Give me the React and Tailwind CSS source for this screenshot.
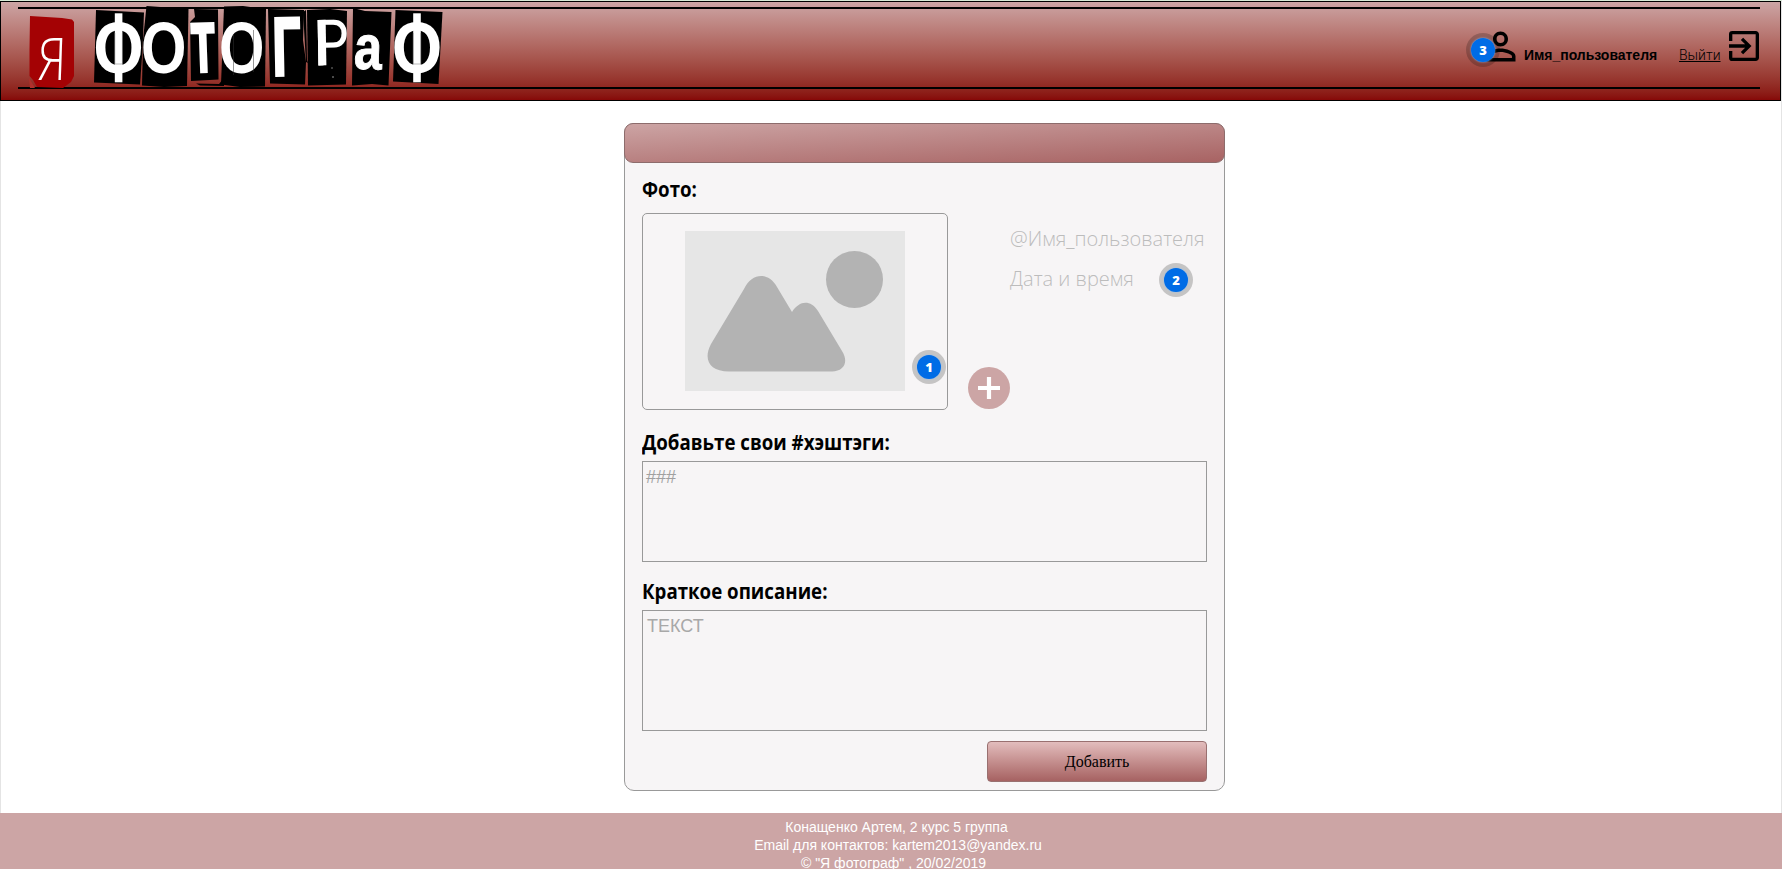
import React from "react";
import { MdPersonOutline, MdExitToApp } from "react-icons/md";

const TILES = [
  "96,10 144,12.5 142.5,50 140,84.5 94,82.5",
  "146.5,6 188.5,9 187,86 164,87 142,85.5 143,40",
  "194,9 218,9.5 218.5,79.5 191,81 190,22 195,17",
  "224,6.5 243,6 266,9 265,86.5 240,87 221,84.5",
  "268,9 304,10 303,40 306,62 305,84.5 270,83.5",
  "307,10 330,9 347,11 346,84.5 308,85.5",
  "353,8 365,11 391.5,12 388.5,85.5 372,84 352,85.5",
  "395.5,10 442.5,12 438.5,84 393,81.5",
];

const SCRAPS = ["196,83.5 219,84 224,78 224,86 200,85.5", "303,12 306,10 307,60 308,63 306,62"];

const LETTERS = [
  { ch: "О", x: 163.8, y: 73, size: 73, sx: 0.8, rot: 0, stroke: 0 },
  { ch: "Т", x: 204, y: 71, size: 68, sx: 0.55, rot: -2, stroke: 4 },
  { ch: "О", x: 241.8, y: 73, size: 73, sx: 0.8, rot: 0, stroke: 0 },
  { ch: "Г", x: 287, y: 75, size: 82, sx: 0.6, rot: -1, stroke: 3.5 },
  { ch: "а", x: 367.5, y: 69, size: 63, sx: 0.8, rot: 2, stroke: 1 },
];

function BigF({ x }) {
  return (
    <g>
      <text
        transform={`translate(${x} 73) scale(0.89 1)`}
        fontSize="73"
        textAnchor="middle"
        fill="#fff"
      >
        О
      </text>
      <rect x={x - 3.8} y="13.3" width="7.6" height="69" fill="#fff" />
      <path d={`M${x - 3.8} 33V64M${x + 3.8} 33V64M${x - 3.8} 64h7.6`} stroke="#777" strokeWidth="0.5" fill="none" />
    </g>
  );
}

function Logo() {
  return (
    <svg
      width="418"
      height="84"
      viewBox="28 5 418 84"
      className="block shrink-0 overflow-visible"
      fontFamily="Liberation Sans, sans-serif"
      fontWeight="700"
    >
      <polygon points="30,16 62,18 72,19.5 74,22 74,76 71,82 63,88 37,87 33,80 29.5,76 29.5,50" fill="#a40204" />
      <path d="M29 78l6 10h-5z" fill="#b0302c" />
      <text
        transform="translate(51.5 80) skewX(-2) scale(0.8 1)"
        fontFamily="Open Sans, sans-serif"
        fontSize="59"
        fontWeight="300"
        textAnchor="middle"
        fill="#fff"
      >
        Я
      </text>
      {TILES.map((p) => (
        <polygon key={p} points={p} fill="#000" />
      ))}
      {SCRAPS.map((p) => (
        <polygon key={p} points={p} fill="#000" />
      ))}
      <BigF x={118.6} />
      {LETTERS.map((l) => (
        <text
          key={l.x}
          transform={`translate(${l.x} ${l.y}) rotate(${l.rot}) scale(${l.sx} 1)`}
          fontSize={l.size}
          textAnchor="middle"
          fill="#fff"
          stroke="#fff"
          strokeWidth={l.stroke}
        >
          {l.ch}
        </text>
      ))}
      <text
        transform="translate(314 65.5) rotate(-1) scale(0.82 1)"
        fontSize="66"
        fontWeight="400"
        fill="#fff"
      >
        Р
      </text>
      <rect x="318" y="20" width="8" height="45.5" fill="#fff" transform="rotate(-1 318 42)" />
      <BigF x={417} />
      <path d="M233.5 34V75M253.5 30V72" stroke="#333" strokeWidth="0.5" />
      <circle cx="332" cy="68" r="0.7" fill="#aaa" />
      <circle cx="333" cy="77" r="0.8" fill="#aaa" />
    </svg>
  );
}

function Badge({ n, className }) {
  return (
    <span
      className={`absolute flex size-[34px] items-center justify-center rounded-full bg-black/20 ${className}`}
    >
      <span className="flex size-[24px] items-center justify-center rounded-full bg-[#006ce6] font-['Open_Sans',sans-serif] text-[13px] leading-none font-extrabold text-white shadow-[0_0_2px_#8fbdf0]">
        {n}
      </span>
    </span>
  );
}

function Header() {
  return (
    <header className="mt-px h-[100px] w-[1781px] border border-black bg-linear-to-b from-[#cca5a5] to-[#860808] pt-[5px] pl-[17px]">
      <div className="flex h-[82px] w-[1742px] justify-between border-y-2 border-black">
        <div className="-mt-[4px] ml-[10px]">
          <Logo />
        </div>
        <div className="flex pt-[15px]">
          <div className="relative h-[45px] w-[45px]">
            <MdPersonOutline size={45} className="block" />
            <Badge n="3" className="top-[9px] -left-[12px]" />
          </div>
          <span className="mt-[22px] ml-px w-[155px] font-['Liberation_Sans',sans-serif] text-[14px] leading-[18px] font-bold tracking-[-0.03px]">
            Имя_пользователя
          </span>
          <a className="mt-[22px] w-[45px] font-['Roboto',sans-serif] text-[14px] leading-[18px] font-light underline">
            Выйти
          </a>
          <MdExitToApp size={40} className="-mr-[4px] mt-[2px] block" />
        </div>
      </div>
    </header>
  );
}

function Placeholder() {
  return (
    <svg width="220" height="160" viewBox="0 0 220 160" className="block">
      <rect width="220" height="160" fill="#e6e6e6" />
      <circle cx="169.5" cy="48.5" r="28.5" fill="#b3b3b3" />
      <path
        d="M59 58C67 41 84 41 92 56L107 81C114 70 125 68 133 80L157 120C164 131 159 140.5 147 140.5H44C24 140.5 18 128 26 113Z"
        fill="#b3b3b3"
      />
    </svg>
  );
}

function Label({ children, className }) {
  return (
    <h2
      className={`origin-left scale-x-[0.85] font-['Open_Sans','Noto_Sans',sans-serif] text-[22px] leading-[30px] font-bold whitespace-nowrap text-black ${className}`}
    >
      {children}
    </h2>
  );
}

export default function App() {
  return (
    <div className="flex h-[869px] w-[1782px] flex-col overflow-hidden border-t border-t-[#d8ecd8] bg-white">
      <div className="-mt-px flex grow flex-col border-x border-[#e4e4e4]">
        <div className="-mx-px shrink-0">
          <Header />
        </div>
        <main className="mt-[22px] ml-[623px] h-[668px] w-[601px] shrink-0 rounded-[10px] border border-[#999] bg-[#f7f5f6]">
          <div className="-mt-px -ml-px h-10 w-[601px] rounded-[9px] border border-[#8d6c6c] bg-linear-[177deg] from-[#cca4a4] to-[#a86363]" />
          <div className="px-[17px]">
            <Label className="mt-[10px]">Фото:</Label>
            <div className="mt-[10px] flex">
              <div className="relative h-[197px] w-[306px] rounded-[5px] border border-[#999] pt-[17px] pl-[42px]">
                <Placeholder />
                <Badge n="1" className="top-[136px] left-[269px]" />
              </div>
              <div className="mt-[154px] ml-[20px] flex size-[42px] items-center justify-center rounded-full bg-[#cca5a5]">
                <svg width="22" height="22" viewBox="0 0 22 22">
                  <path d="M11 0V22M0 11H22" stroke="#fff" strokeWidth="4.2" />
                </svg>
              </div>
              <div className="relative mt-[6px] font-['Open_Sans','Noto_Sans',sans-serif] text-[20px] leading-10 font-light whitespace-nowrap text-[#bcbcbc]">
                <p>@Имя_пользователя</p>
                <p>Дата и время</p>
                <Badge n="2" className="top-[44px] left-[149px]" />
              </div>
            </div>
            <Label className="mt-[16px]">Добавьте свои #хэштэги:</Label>
            <div className="mt-[5px] h-[101px] w-[565px] border border-[#999] px-[3px] pt-[5px] font-['Liberation_Sans',sans-serif] text-[18px] leading-[21px] text-[#a0a0a0]">
              ###
            </div>
            <Label className="mt-[13px]">Краткое описание:</Label>
            <div className="mt-[5px] h-[121px] w-[565px] border border-[#999] px-[4px] pt-[5px] font-['Liberation_Sans',sans-serif] text-[18px] leading-[21px] text-[#a8a8a8]">
              ТЕКСТ
            </div>
            <button className="mt-[10px] ml-[345px] block h-[41px] w-[220px] rounded-[4px] border border-[#997070] bg-linear-to-b from-[#e2bdbd] to-[#a66262] pt-px font-['Liberation_Serif',serif] text-[16px] text-black">
              Добавить
            </button>
          </div>
        </main>
        <footer className="-mx-px mt-[22px] flex grow flex-col items-center bg-[#cca5a5] pt-[5px] font-['Liberation_Sans',sans-serif] text-[14px] leading-[18px] text-white">
          <p className="pl-[11px]">Конащенко Артем, 2 курс 5 группа</p>
          <p className="pl-[14px]">Email для контактов: kartem2013@yandex.ru</p>
          <p className="pl-[5px]">© "Я фотограф" , 20/02/2019</p>
        </footer>
      </div>
    </div>
  );
}
